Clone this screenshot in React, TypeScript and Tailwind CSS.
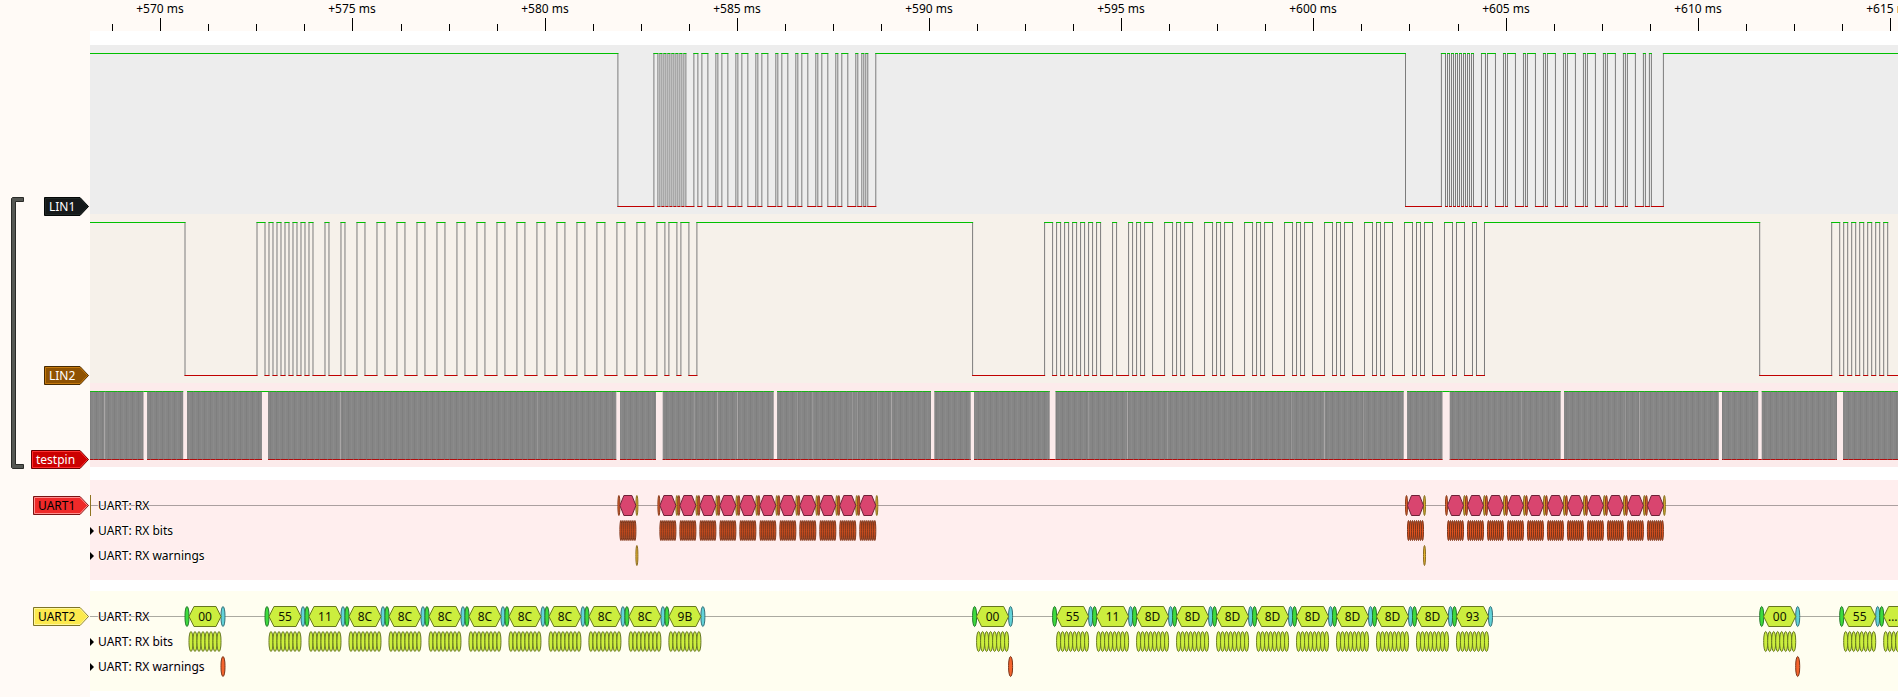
import React from "react";

const GUTTER = 90;

type Frame = { start: number; bytes: number[] };
type Burst = { fall: number; rise: number; frame: Frame };
type Bus = { bit: number; bursts: Burst[] };

const repeat = (value: number, count: number): number[] => Array.from({ length: count }, () => value);

const lin1: Bus = {
  bit: 1.999,
  bursts: [
    { fall: 617.9, rise: 653.9, frame: { start: 657.9, bytes: [0x55, 0x85, ...repeat(0x0e, 8), 0x0a] } },
    { fall: 1405.5, rise: 1441.4, frame: { start: 1445.5, bytes: [0x55, 0x85, ...repeat(0x0f, 8), 0x02] } },
  ],
};

const lin2: Bus = {
  bit: 3.999,
  bursts: [
    { fall: 185, rise: 257, frame: { start: 265, bytes: [0x55, 0x11, ...repeat(0x8c, 8), 0x9b] } },
    { fall: 972.6, rise: 1044.6, frame: { start: 1052.6, bytes: [0x55, 0x11, ...repeat(0x8d, 8), 0x93] } },
    { fall: 1759.7, rise: 1831.7, frame: { start: 1839.7, bytes: [0x55, 0x11] } },
  ],
};

/** Every x at which the line changes level; the line idles high. */
function edgesOf(bus: Bus): number[] {
  const edges: number[] = [];
  for (const burst of bus.bursts) {
    edges.push(burst.fall, burst.rise);
    let level = 1;
    burst.frame.bytes.forEach((byte, n) => {
      const x0 = burst.frame.start + n * 10 * bus.bit;
      for (let i = 0; i < 10; i++) {
        const next = i === 0 ? 0 : i === 9 ? 1 : (byte >> (i - 1)) & 1;
        if (next !== level) edges.push(x0 + i * bus.bit);
        level = next;
      }
    });
  }
  return edges;
}

function LogicTrace({ bus, className }: { bus: Bus; className: string }) {
  const edges = edgesOf(bus);
  const stops = [0, ...edges, 6000];
  let high = "";
  let low = "";
  for (let i = 0; i < stops.length - 1; i++) {
    const piece = `M${stops[i] - 0.5} ${i % 2 ? 161.5 : 8.5}H${stops[i + 1] + 0.5}`;
    if (i % 2) low += piece;
    else high += piece;
  }
  return (
    <svg className={`block h-[169px] w-full ${className}`} aria-hidden="true">
      <g transform={`translate(${-GUTTER} 0)`} fill="none">
        <path d={edges.map((x) => `M${x} 8V162`).join("")} stroke="#7c7c7c" />
        <path d={high} stroke="#00c000" />
        <path d={low} stroke="#c00000" />
      </g>
    </svg>
  );
}

/** Pauses of the fast signal: [from, to, level held]. */
const pauses: [number, number, 0 | 1][] = [
  [143.5, 147, 1], [183.2, 187, 0], [262, 268, 1], [616.3, 620, 1], [656, 662.7, 1],
  [773.7, 777, 0], [931, 934.3, 0], [970.7, 974, 1], [1049.7, 1055.5, 0],
  [1403.7, 1407, 0], [1442.5, 1449.7, 1], [1560.6, 1564, 0], [1718.8, 1722, 1],
  [1758.2, 1761.7, 0], [1837, 1843, 1],
];

const strongGlints = [104, 340, 717, 737, 891, 1127, 1324, 1639];
const faintGlints = [537, 694, 797, 812, 852, 857, 877, 1088, 1167, 1251, 1291, 1363, 1521, 1625];

function ClockTrace() {
  const runs: [number, number][] = [];
  let from = 0;
  for (const [a, b] of pauses) {
    runs.push([from, a]);
    from = b;
  }
  runs.push([from, 6000]);
  return (
    <svg className="block h-[84px] w-full bg-[#fcebeb]" aria-hidden="true">
      <defs>
        <pattern id="strands" width="6" height="84" patternUnits="userSpaceOnUse">
          <path d="M0 0H6V84H0Z" fill="#868686" />
          <path d="M0 0H1V84H0Z" fill="#7f7f7f" />
          <path d="M3 0H4V84H3Z" fill="#8b8b8b" />
        </pattern>
        <pattern id="greenDash" width="19" height="84" patternUnits="userSpaceOnUse">
          <path d="M0 0H19V84H0Z" fill="#16b416" />
          <path d="M3 0H4V84H3ZM10 0H11V84H10Z" fill="#3a9f3a" />
        </pattern>
        <pattern id="redDash" width="13" height="84" patternUnits="userSpaceOnUse">
          <path d="M0 0H13V84H0Z" fill="#b30d0d" />
          <path d="M2 0H3V84H2ZM7 0H8V84H7Z" fill="#9b4040" />
        </pattern>
      </defs>
      <g transform={`translate(${-GUTTER} 0)`}>
        {runs.map(([a, b]) => (
          <g key={a}>
            <rect x={a} y="8" width={b - a} height="69" fill="url(#strands)" />
            <rect x={a} y="8" width={b - a} height="1" fill="url(#greenDash)" />
            <rect x={a} y="76" width={b - a} height="1" fill="url(#redDash)" />
          </g>
        ))}
        {strongGlints.map((x) => (
          <rect key={x} x={x} y="9" width="1" height="67" fill="#aaa7a7" />
        ))}
        {faintGlints.map((x) => (
          <rect key={x} x={x} y="9" width="1" height="67" fill="#989797" />
        ))}
        {pauses.map(([a, b, level]) => (
          <rect key={a} x={a} y={level ? 8 : 76} width={b - a} height="1" fill={level ? "#00c000" : "#c00000"} />
        ))}
      </g>
    </svg>
  );
}

type Paint = { fill: string; stroke: string };
type Palette = { start: Paint; data: Paint; bit: Paint; stop: Paint; warn: Paint };

const palette1: Palette = {
  start: { fill: "#d9602c", stroke: "#8a3c1c" },
  data: { fill: "#d9456f", stroke: "#6d2238" },
  bit: { fill: "#e25522", stroke: "#7d3519" },
  stop: { fill: "#dcb02f", stroke: "#86701f" },
  warn: { fill: "#e6b52e", stroke: "#8a6a20" },
};

const palette2: Palette = {
  start: { fill: "#3edb3e", stroke: "#22782a" },
  data: { fill: "#ccee3e", stroke: "#66771f" },
  bit: { fill: "#ccee3e", stroke: "#66771f" },
  stop: { fill: "#62d3d8", stroke: "#347078" },
  warn: { fill: "#f4642d", stroke: "#7a3317" },
};

function Sliver({ x, w, paint }: { x: number; w: number; paint: Paint }) {
  return <rect x={x} y="2.5" width={w} height="20" rx={w / 2} ry="9" fill={paint.fill} stroke={paint.stroke} />;
}

function Hexagon({ x, w, cut, paint }: { x: number; w: number; cut: number; paint: Paint }) {
  const points = `${x},12.5 ${x + cut},2.5 ${x + w - cut},2.5 ${x + w},12.5 ${x + w - cut},22.5 ${x + cut},22.5`;
  return <polygon points={points} fill={paint.fill} stroke={paint.stroke} />;
}

const decoded = (bus: Bus) =>
  bus.bursts.flatMap((burst) => [
    { x: burst.fall, byte: 0 },
    ...burst.frame.bytes.map((byte, n) => ({ x: burst.frame.start + n * 10 * bus.bit, byte })),
  ]);

const hex = (n: number) => n.toString(16).toUpperCase().padStart(2, "0");

type DecoderProps = {
  bus: Bus;
  palette: Palette;
  captioned: boolean;
  cut: number;
  clippedFrom?: number;
  leading?: React.ReactNode;
  className: string;
};

function RowCaption({ text, expandable }: { text: string; expandable: boolean }) {
  const halo = "[text-shadow:1px_0_#fff9f6,-1px_0_#fff9f6,0_1px_#fff9f6,0_-1px_#fff9f6]";
  if (!expandable) return <span className={`relative pl-2 ${halo}`}>{text}</span>;
  return (
    <button type="button" className={`relative flex items-center gap-1 ${halo}`}>
      <svg className="h-2 w-1" viewBox="0 0 4 8" aria-hidden="true">
        <path d="M0 0L4 4L0 8Z" />
      </svg>
      {text}
    </button>
  );
}

function DecoderRow({ caption, expandable, children }: { caption: string; expandable: boolean; children: React.ReactNode }) {
  return (
    <div className="relative flex h-[25px] items-center text-xs text-black">
      <svg className="absolute inset-0 h-full w-full" aria-hidden="true">
        <g transform={`translate(${-GUTTER} 0)`}>{children}</g>
      </svg>
      <RowCaption text={caption} expandable={expandable} />
    </div>
  );
}

function Decoder({ bus, palette, captioned, cut, clippedFrom = Infinity, leading, className }: DecoderProps) {
  const bytes = decoded(bus);
  const { bit } = bus;
  return (
    <div className={`h-[100px] pt-[13px] ${className}`}>
      <DecoderRow caption="UART: RX" expandable={false}>
        <path d="M90 12.5H6000" stroke="#000000" strokeOpacity="0.33" />
        {leading}
        {bytes.map(({ x, byte }) => (
          <g key={x}>
            <Sliver x={x} w={bit} paint={palette.start} />
            <Sliver x={x + 9 * bit} w={bit} paint={palette.stop} />
            <Hexagon x={x + bit} w={8 * bit} cut={cut} paint={palette.data} />
            {captioned && (
              <text x={x > clippedFrom ? x + 13 : x + 5 * bit} y="17" textAnchor="middle" fontSize="12" fill="#101400">
                {x > clippedFrom ? "…" : hex(byte)}
              </text>
            )}
          </g>
        ))}
      </DecoderRow>
      <DecoderRow caption="UART: RX bits" expandable>
        {bytes.map(({ x }) =>
          repeat(0, 8).map((_, i) => <Sliver key={`${x}-${i}`} x={x + (i + 1) * bit} w={bit} paint={palette.bit} />),
        )}
      </DecoderRow>
      <DecoderRow caption="UART: RX warnings" expandable>
        {bus.bursts.map(({ fall }) => (
          <Sliver key={fall} x={fall + 9 * bit} w={bit} paint={palette.warn} />
        ))}
      </DecoderRow>
    </div>
  );
}

const TICK = 48.045;

function Ruler() {
  const ticks = Array.from({ length: 38 }, (_, n) => n - 1);
  return (
    <svg className="block h-[31px] w-full bg-[#fffaf6]" role="img" aria-label="Time scale">
      {ticks.map((i) => {
        const x = Math.floor(160.8 + i * TICK);
        const major = i % 4 === 0;
        return (
          <g key={i}>
            <rect x={x} y={major ? 18 : 24} width="1" height={major ? 13 : 7} />
            {major && (
              <text x={x} y="13" textAnchor="middle" fontSize="12">
                {`+${570 + (i / 4) * 5} ms`}
              </text>
            )}
          </g>
        );
      })}
    </svg>
  );
}

type TagProps = { name: string; width: number; fill: string; inner: string; outer: string; className: string };

function Tag({ name, width, fill, inner, outer, className }: TagProps) {
  const shape = (d: number) =>
    `${d},${d} ${width - 9},${d} ${width - d},9.5 ${width - 9},${19 - d} ${d},${19 - d}`;
  return (
    <button type="button" className={`relative flex h-[19px] items-center pl-[5px] pr-3 text-xs ${className}`}>
      <svg className="absolute inset-0 h-full w-full" aria-hidden="true">
        <polygon points={shape(0.5)} fill={fill} stroke={outer} />
        <polygon points={shape(1.5)} fill="none" stroke={inner} />
      </svg>
      <span className="relative">{name}</span>
    </button>
  );
}

function Sidebar() {
  return (
    <aside className="flex w-[90px] shrink-0 justify-between bg-[#fffaf6] pl-[11px] pr-px">
      <svg className="mt-[166px] h-[272px] w-[13px]" aria-hidden="true">
        <path
          d="M12.5 0.5H1.5L0.5 1.5V270.5L1.5 271.5H12.5V267.5H4.5V4.5H12.5Z"
          fill="#555753"
          stroke="#2a2b28"
        />
      </svg>
      <div className="flex flex-col items-end">
        <Tag name="LIN1" width={45} fill="#16191a" inner="#1f2725" outer="#050707" className="mt-[166px] w-[45px] text-white" />
        <Tag name="LIN2" width={45} fill="#8f5202" inner="#c4780c" outer="#472901" className="mt-[150px] w-[45px] text-white" />
        <Tag name="testpin" width={58} fill="#cc0000" inner="#ff3030" outer="#660000" className="mt-[65px] w-[58px] text-white" />
        <Tag name="UART1" width={56} fill="#ef2929" inner="#ff8f8f" outer="#771414" className="mt-[27px] w-[56px] text-black" />
        <Tag name="UART2" width={56} fill="#fce94f" inner="#fff79a" outer="#7e7427" className="mt-[92px] w-[56px] text-black" />
      </div>
    </aside>
  );
}

export default function App() {
  return (
    <div className="flex min-h-screen flex-col bg-white font-['Noto_Sans',sans-serif]">
      <Ruler />
      <div className="flex flex-1">
        <Sidebar />
        <main className="min-w-0 flex-1 pt-[14px]">
          <LogicTrace bus={lin1} className="bg-[#ededed]" />
          <LogicTrace bus={lin2} className="bg-[#f6f1ea]" />
          <ClockTrace />
          <Decoder
            bus={lin1}
            palette={palette1}
            captioned={false}
            cut={4}
            leading={<rect x="90" y="2" width="1" height="21" fill="#8f7420" />}
            className="mt-[13px] bg-[#ffeeee]"
          />
          <Decoder
            bus={lin2}
            palette={palette2}
            captioned
            cut={5}
            clippedFrom={1870}
            className="mt-[11px] bg-[#fffef0]"
          />
        </main>
      </div>
    </div>
  );
}
